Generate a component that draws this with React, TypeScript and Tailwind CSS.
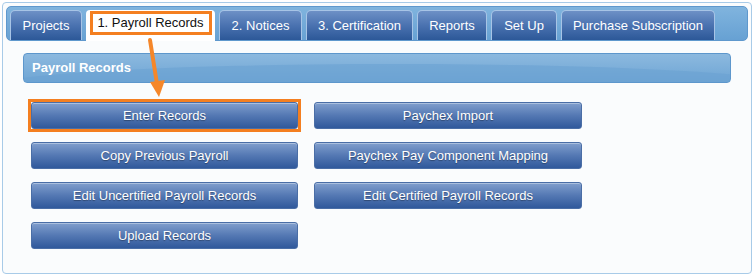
const font = { fontFamily: '"Liberation Sans", Arial, sans-serif' };

const tabs = [
  { label: "Projects", w: "w-[72px]" },
  { label: "1. Payroll Records", w: "w-[129px]", active: true },
  { label: "2. Notices", w: "w-[83px]" },
  { label: "3. Certification", w: "w-[107px]" },
  { label: "Reports", w: "w-[70px]" },
  { label: "Set Up", w: "w-[66px]" },
  { label: "Purchase Subscription", w: "w-[154px]" },
];

const left = ["Enter Records", "Copy Previous Payroll", "Edit Uncertified Payroll Records", "Upload Records"];
const right = ["Paychex Import", "Paychex Pay Component Mapping", "Edit Certified Payroll Records"];

function Btn({ label }: { label: string }) {
  return (
    <button className="h-[27px] w-full rounded-[3px] border border-[#4a6ea6] bg-gradient-to-b from-[#819fcd] via-[#5478b3] to-[#30599b] text-[13px] text-white [text-shadow:0_1px_1px_rgba(0,0,0,0.35)] shadow-[inset_0_1px_0_rgba(255,255,255,0.35)]">
      {label}
    </button>
  );
}

export default function App() {
  return (
    <div className="relative h-[277px] w-[754px] bg-white p-[2px]" style={font}>
      <div className="h-[272px] rounded-[4px] border border-[#a8cbe8] bg-[#fafcfd] px-[3px] pt-[3px]">
        {/* tab strip */}
        <div className="flex h-[35px] items-end gap-[4px] rounded-[5px] border border-[#5e98cd] bg-gradient-to-b from-[#80b4de] to-[#67a1d3] pl-[3px]">
          {tabs.map((t) =>
            t.active ? (
              <div
                key={t.label}
                className={`${t.w} -mb-[1px] flex h-[31px] items-start justify-center rounded-t-[4px] bg-white pt-[1px]`}
              >
                <span className="flex h-[24px] w-[122px] items-center justify-center border-[3px] border-[#f47f20] text-[13px] text-[#111]">
                  {t.label}
                </span>
              </div>
            ) : (
              <div
                key={t.label}
                className={`${t.w} flex h-[30px] items-center justify-center rounded-t-[5px] border border-b-0 border-[#a7c4e6] bg-gradient-to-b from-[#6d90c6] via-[#4a72b0] to-[#2c5898] text-[13px] text-white`}
              >
                {t.label}
              </div>
            )
          )}
        </div>

        {/* panel */}
        <div className="px-[17px] pt-[12px]">
          <div className="relative h-[30px] overflow-hidden rounded-[4px] border border-[#5d97cc] bg-gradient-to-b from-[#8cb9df] to-[#6ea5d4]">
            <div className="absolute -bottom-[30px] left-[-40px] h-[48px] w-[820px] rounded-[50%] bg-[#6aa1d2] opacity-60" />
            <div className="relative flex h-full items-center pl-[8px] text-[13px] font-bold text-white">
              Payroll Records
            </div>
          </div>

          <div className="flex gap-[16px] pl-[8px] pt-[19px]">
            <div className="flex w-[267px] flex-col gap-[13px]">
              {left.map((l, i) =>
                i === 0 ? (
                  <div key={l} className="-m-[3px] border-[3px] border-[#f47f20]">
                    <Btn label={l} />
                  </div>
                ) : (
                  <Btn key={l} label={l} />
                )
              )}
            </div>
            <div className="flex w-[268px] flex-col gap-[13px]">
              {right.map((l) => (
                <Btn key={l} label={l} />
              ))}
            </div>
          </div>
        </div>
      </div>

      {/* callout arrow */}
      <svg className="pointer-events-none absolute left-0 top-0" width="754" height="277">
        <line x1="150" y1="40" x2="157" y2="84" stroke="#f5872a" strokeWidth="4" strokeLinecap="round" />
        <polygon points="150,82 165,80 159,97" fill="#f5872a" />
      </svg>
    </div>
  );
}
